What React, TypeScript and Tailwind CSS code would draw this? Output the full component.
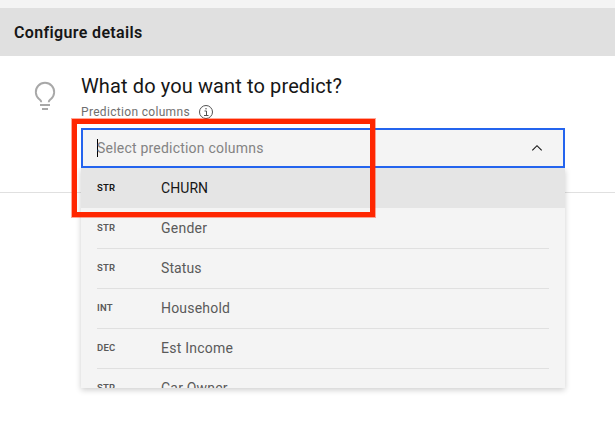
const options = [
  { type: 'STR', name: 'CHURN', spacing: 'tracking-[0.08px]' },
  { type: 'STR', name: 'Gender', spacing: 'tracking-[0.25px]' },
  { type: 'STR', name: 'Status', spacing: 'tracking-[0.1px]' },
  { type: 'INT', name: 'Household', spacing: 'tracking-[0.2px]' },
  { type: 'DEC', name: 'Est Income', spacing: 'tracking-[0.25px]' },
  { type: 'STR', name: 'Car Owner', spacing: 'tracking-[0.2px]' },
];

function Bulb() {
  return (
    <svg className="mt-[24px] h-8 w-8 shrink-0" viewBox="0 0 32 32" fill="none" stroke="#a8a8a8" strokeWidth="1.9">
      <path d="M11 25h10M13 29h6" />
      <path d="M12.300 22.300c0-1.500-.8-2.100-2-3.100A9.200 9.200 0 1 1 21.700 19.200c-1.200 1-2 1.600-2 3.100" />
    </svg>
  );
}

function Info() {
  return (
    <svg className="h-4 w-4" viewBox="0 0 16 16" fill="none" stroke="#525252">
      <circle cx="8" cy="8" r="6.5" />
      <path d="M6.500 7h2v4.500M6 11.500h4.500" />
      <circle cx="8" cy="4.700" r=".75" fill="#525252" stroke="none" />
    </svg>
  );
}

function Row({ type, name, spacing, index }: { type: string; name: string; spacing: string; index: number }) {
  const active = index === 0;
  return (
    <li className={active ? 'h-10 bg-[#e5e5e5] px-4 text-[#161616]' : 'h-10 px-4 text-[#5a5a5a]'}>
      <div className={index > 1 ? 'flex h-10 items-center border-t border-[#e0e0e0] pb-px' : 'flex h-10 items-center'}>
        <span className="w-16 text-[9.5px] font-semibold leading-none tracking-[0.2px]">{type}</span>
        <span className={`text-sm ${spacing}`}>{name}</span>
      </div>
    </li>
  );
}

export default function App() {
  return (
    <div className="h-[429px] w-[615px] overflow-hidden bg-white pt-2 font-['Roboto','Noto_Sans',sans-serif] text-[#161616] shadow-[inset_0_8px_0_#f4f4f4]">
      <header className="flex h-12 items-center bg-[#e0e0e0] pl-[14px] pt-px">
        <h1 className="text-base font-semibold tracking-[0.35px]">Configure details</h1>
      </header>
      <section className="flex h-[137px] border-b border-[#e0e0e0] pl-[29px]">
        <Bulb />
        <div className="ml-5 w-[484px]">
          <h2 className="mt-[16px] h-7 whitespace-nowrap text-xl leading-7 tracking-[0.12px]">What do you want to predict?</h2>
          <div className="mt-1 flex h-4 items-center gap-2 text-xs text-[#6f6f6f]">
            <span className="w-[109px] whitespace-nowrap tracking-[0.32px]">Prediction columns</span>
            <Info />
          </div>
          <div className="relative mt-2 flex h-10 items-center justify-between border-2 border-[#2464ee] bg-[#f4f4f4] pl-[14px] pr-[18px]">
            <span className="flex items-center text-sm tracking-[0.21px] text-[#838383]">
              <i className="-mr-px h-[18px] w-px bg-black" />
              Select prediction columns
            </span>
            <svg className="h-4 w-4" viewBox="0 0 16 16" fill="none" stroke="#161616" strokeWidth="1.1">
              <path d="M3.300 10.300 8 5.700l4.700 4.600" />
            </svg>
            <ul className="absolute -left-0.5 top-[38px] h-[220px] w-[484px] overflow-hidden bg-[#f4f4f4] shadow-[0_2px_6px_rgba(0,0,0,0.2)] [clip-path:inset(0_-10px_-12px_-10px)]">
              {options.map((option, index) => (
                <Row key={option.name} {...option} index={index} />
              ))}
            </ul>
            <div className="pointer-events-none absolute -left-[11px] -top-[11px] h-[98px] w-[303px] border-5 border-[#ff2600] outline outline-[#ff2600]/40" />
          </div>
        </div>
      </section>
    </div>
  );
}
